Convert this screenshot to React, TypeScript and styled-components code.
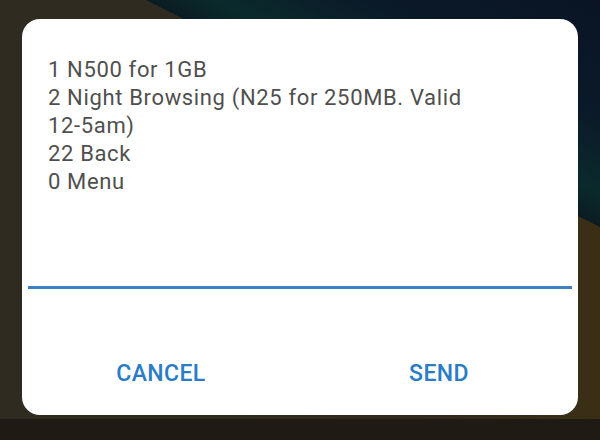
import React from 'react'
import styled, { createGlobalStyle } from 'styled-components'

const GlobalStyle = createGlobalStyle`
  html, body {
    margin: 0;
    padding: 0;
  }
  body {
    width: 600px;
    height: 440px;
    overflow: hidden;
    font-family: Roboto, 'Noto Sans', sans-serif;
  }
`

// wallpaper behind the dialog
const Screen = styled.div`
  width: 600px;
  height: 440px;
  box-sizing: border-box;
  padding: 19px 22px 0;
  background:
    linear-gradient(to bottom, transparent 419px, #1f1a13 419px),
    linear-gradient(
      26.57deg,
      transparent 69.3%,
      #0a1c22 69.3%,
      #0b2a2c 74%,
      #0b1a28 84%,
      #0a1424 100%
    ),
    linear-gradient(to right, #2f2b20 0%, #302a1e 70%, #3a2f15 100%);
`

const Dialog = styled.div`
  height: 396px;
  background: #fff;
  border-radius: 18px;
  display: flex;
  flex-direction: column;
  overflow: hidden;
`

const Message = styled.div`
  padding: 37px 26px 0;
  height: 250px;
  box-sizing: border-box;
  font-size: 22px;
  line-height: 28px;
  letter-spacing: 0.65px;
  color: #4f4f4f;
  white-space: pre-line;
`

const Field = styled.div`
  margin: 0 6px;
  height: 17px;
  border-bottom: 3px solid #3a80c2;
`

const Actions = styled.div`
  flex: 1;
  display: grid;
  grid-template-columns: 1fr 1fr;
  align-items: start;
  padding-top: 71px;
`

const ActionButton = styled.button`
  background: none;
  border: none;
  padding: 0;
  font-family: Roboto, 'Noto Sans', sans-serif;
  font-weight: 500;
  font-size: 23px;
  line-height: 27px;
  letter-spacing: 0.4px;
  color: #2a7cc7;
  text-align: center;
  cursor: pointer;
`

const lines = [
  '1 N500 for 1GB',
  '2 Night Browsing (N25 for 250MB. Valid',
  '12-5am)',
  '22 Back',
  '0 Menu',
]

const App: React.FC = () => {
  return (
    <>
      <GlobalStyle />
      <Screen>
        <Dialog>
          <Message>{lines.join('\n')}</Message>
          <Field />
          <Actions>
            <ActionButton>CANCEL</ActionButton>
            <ActionButton>SEND</ActionButton>
          </Actions>
        </Dialog>
      </Screen>
    </>
  )
}

export default App
